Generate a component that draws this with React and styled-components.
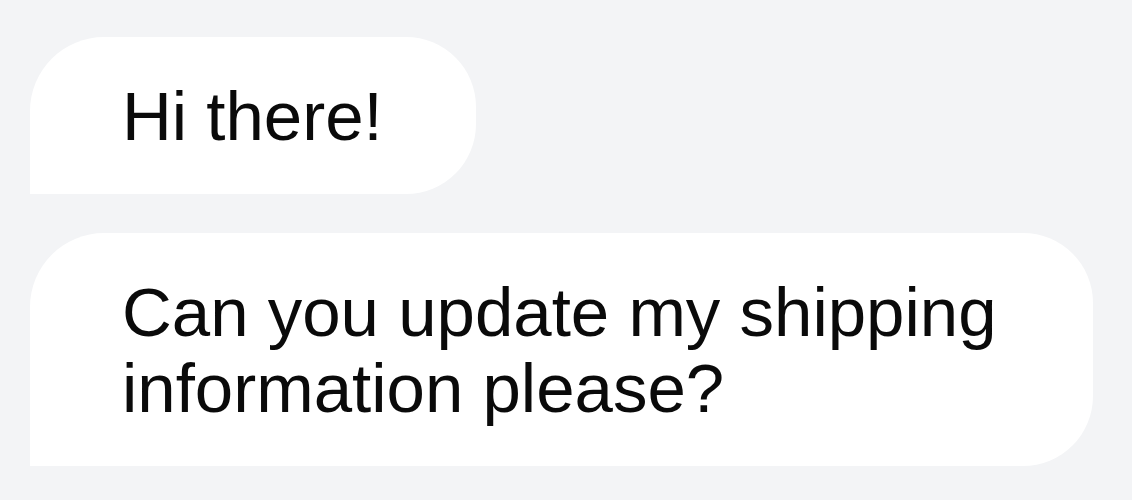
import React from "react";
import styled, { createGlobalStyle } from "styled-components";

const Global = createGlobalStyle`
  html, body { margin: 0; padding: 0; background: #f3f4f6; }
  body { font-family: "Liberation Sans", Arial, sans-serif; }
`;

const Thread = styled.div`
  display: flex;
  flex-direction: column;
  align-items: flex-start;
  gap: 39px;
  padding: 37px 0 0 30px;
  min-height: 500px;
  box-sizing: border-box;
  background: #f3f4f6;
`;

const Bubble = styled.div`
  box-sizing: border-box;
  max-width: 1063px;
  padding: 42px 93px 38px 92px;
  background: #ffffff;
  color: #0a0a0a;
  font-family: "Liberation Sans", Arial, sans-serif;
  font-size: 69px;
  line-height: 76.5px;
  border-radius: 74px 70px 70px 0;
`;

export default function App() {
  return (
    <>
      <Global />
      <Thread>
        <Bubble>Hi there!</Bubble>
        <Bubble>Can you update my shipping information please?</Bubble>
      </Thread>
    </>
  );
}
